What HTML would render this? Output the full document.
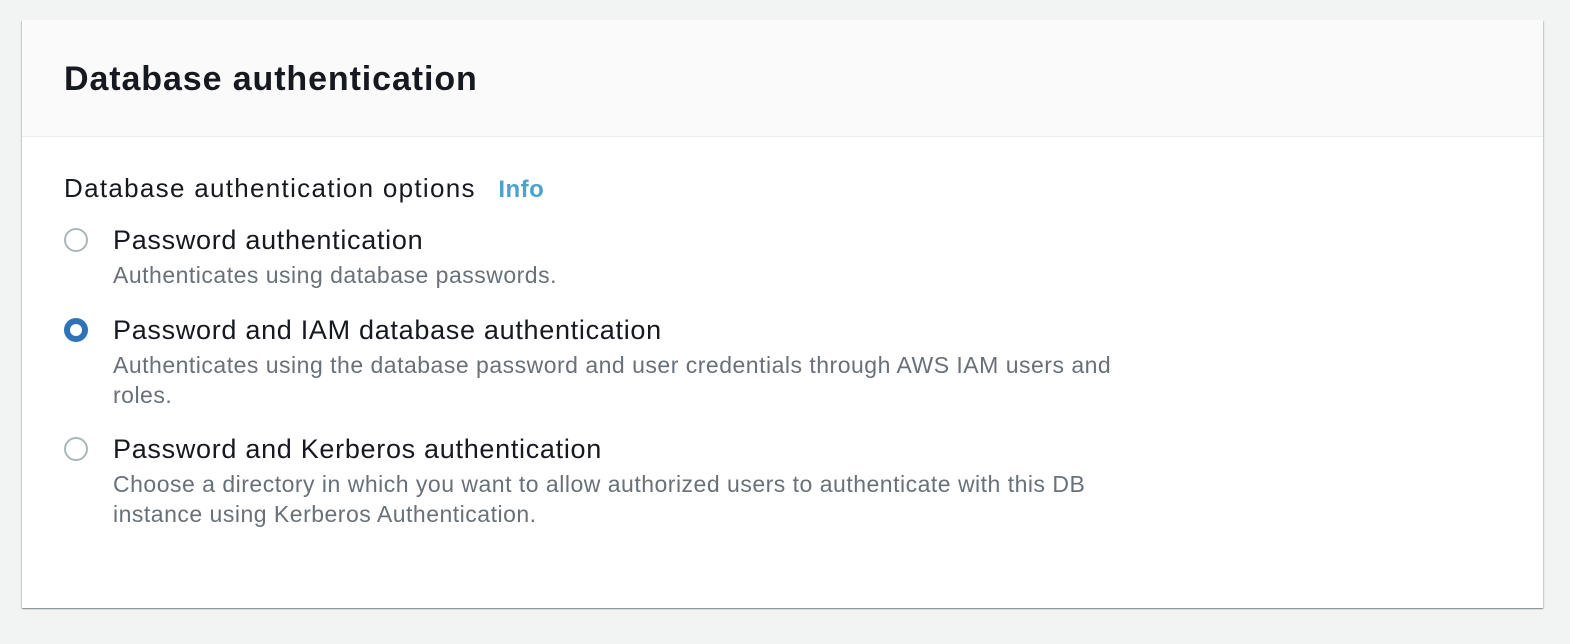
<!DOCTYPE html><html><head><style>
body{margin:0;background:#f2f3f3;font-family:"Liberation Sans",Arial,sans-serif;width:1570px;height:644px;overflow:hidden}
.card{position:absolute;left:22px;top:20px;width:1521px;height:588px;background:#fff;box-shadow:0 1px 1px 0 rgba(0,28,36,.3),1px 1px 1px 0 rgba(0,28,36,.15),-1px 1px 1px 0 rgba(0,28,36,.15)}
.hd{height:116px;background:#fafafa;border-bottom:1px solid #eaeded;position:relative}
.hd h2{position:absolute;left:42px;top:39px;margin:0;font-size:34px;line-height:40px;font-weight:bold;color:#16191f;letter-spacing:0.9px;white-space:nowrap}
.lbl{position:absolute;left:42px;top:153px;font-size:26px;line-height:30px;color:#16191f;letter-spacing:1.3px;white-space:nowrap}
.lbl b{color:#4aa3cc;margin-left:14px;font-size:24px;letter-spacing:0.5px}
.opt{position:absolute;left:42px}
.r{position:absolute;left:0;top:3px;width:24px;height:24px;border:2px solid #aab7b8;border-radius:50%;box-sizing:border-box}
.r.on{border:6px solid #2f73b7}
.t{position:absolute;left:49px;top:0;font-size:27px;line-height:30px;color:#16191f;white-space:nowrap;letter-spacing:0.7px}
.d{position:absolute;left:49px;top:35px;font-size:23px;color:#687078;line-height:30px;width:1010px;letter-spacing:0.5px}
</style></head><body><div class="card">
<div class="hd"><h2>Database authentication</h2></div>
<div class="lbl">Database authentication options <b>Info</b></div>
<div class="opt" style="top:205px"><div class="r"></div><div class="t">Password authentication</div><div class="d">Authenticates using database passwords.</div></div>
<div class="opt" style="top:295px"><div class="r on"></div><div class="t">Password and IAM database authentication</div><div class="d">Authenticates using the database password and user credentials through AWS IAM users and roles.</div></div>
<div class="opt" style="top:414px"><div class="r"></div><div class="t">Password and Kerberos authentication</div><div class="d">Choose a directory in which you want to allow authorized users to authenticate with this DB instance using Kerberos Authentication.</div></div>
</div></body></html>
